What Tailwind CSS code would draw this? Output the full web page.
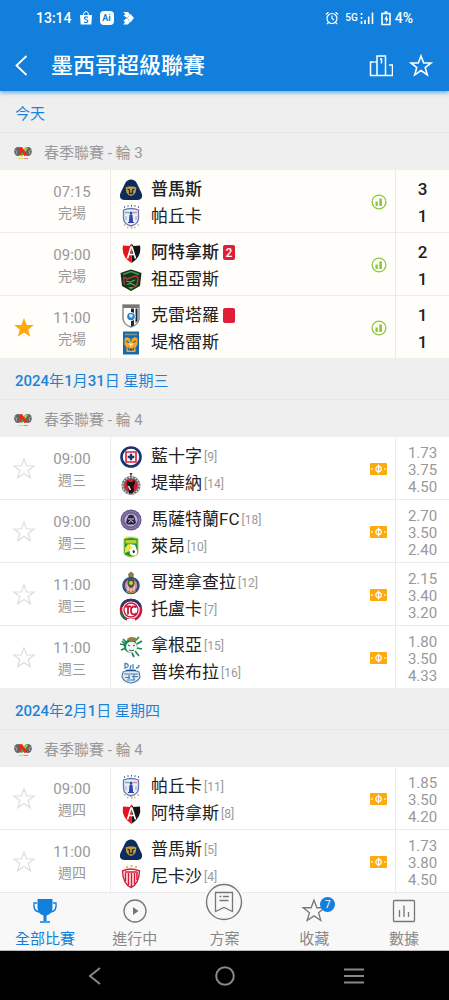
<!DOCTYPE html>
<html lang="zh-Hant">
<head>
    <meta charset="UTF-8">
    <meta name="viewport" content="width=device-width, initial-scale=1.0">
    <title>墨西哥超級聯賽</title>
    <script src="https://cdn.jsdelivr.net/npm/@tailwindcss/browser@4"></script>
</head>
<body class="flex min-h-screen flex-col bg-white font-[Roboto,'Noto_Sans_CJK_TC',sans-serif] text-[#212121]">

    <!-- Shared icons and team crests -->
    <svg class="hidden">
        <symbol id="star" viewBox="0 0 24 24"><path d="M12 2l2.700 7h7.300l-5.800 4.500 2.100 7.300L12 16.500l-6.300 4.300 2.100-7.300L2 9h7.300z" stroke-linejoin="miter"/></symbol>
        <symbol id="liga" viewBox="0 0 18 14">
            <ellipse cx="4" cy="5.500" rx="3.800" ry="4.600" fill="#666"/><ellipse cx="14" cy="5.500" rx="3.800" ry="4.600" fill="#666"/>
            <path d="M1 4l2 1.500L2 8M17 4l-2 1.500L16 8" stroke="#aaa" fill="none"/>
            <path d="M5 1.500L8 1l5.500 8-3 1L5 4z" fill="#f0261c"/>
            <path d="M10 3l1.500-2L14 2l-2.500 4z" fill="#9bd02c"/><path d="M5.500 9L8 6l1.500 2L8 10z" fill="#3fae35"/><path d="M4.500 7L7 5.500 8 7l-2 2z" fill="#f0261c"/>
            <path d="M4 12.500h6" stroke="#e3dc5a"/><path d="M10 12.500h4" stroke="#f08080"/>
        </symbol>
        <symbol id="pumas" viewBox="0 0 24 24">
            <path d="M12 1.500c2.500 0 4.500 1.200 5.700 3.500l4.800 10c1.500 4 0 7-4 7h-13c-4 0-5.500-3-4-7l4.800-10C7.500 2.700 9.500 1.500 12 1.500z" fill="#0b2c5c"/>
            <path d="M6.500 9.500l3-1h5l3 1-1 5-2 2.500-2.500 1-2.500-1-2-2.500z" fill="#c79b3b"/>
            <path d="M8.500 11l2 1v3.500h3V12l2-1" stroke="#0b2c5c" stroke-width="1.300" fill="none"/>
        </symbol>
        <symbol id="pachuca" viewBox="0 0 24 24">
            <path d="M4.500 5q7.500-3 15 0v8q0 6-7.500 8-7.500-2-7.500-8z" fill="#e9edf7" stroke="#6675b5" stroke-width="1.300"/>
            <path d="M6 7.500h4" stroke="#74b696" stroke-width="1.500"/><path d="M14 7.500h4" stroke="#e08a8a" stroke-width="1.500"/>
            <path d="M10.500 17l.5-7h2l.5 7zM9 17.500h6" fill="#3346a0" stroke="#3346a0"/><circle cx="12" cy="8" r="1.500" fill="#3346a0"/>
            <path d="M7 11v4M17 11v4" stroke="#9ba5d0"/>
            <path d="M5 2h1M8.500 1h1M12 .8h1M15.500 1h1M19 2h1" stroke="#3346a0" stroke-width="1.500"/>
            <path d="M5 20h1.500M8 22.500h1.500M12 23h1.500M15 22.500h1.500M18.500 20H20" stroke="#c9b25c" stroke-width="1.500"/>
        </symbol>
        <symbol id="atlas" viewBox="0 0 24 24">
            <path d="M12.500 2.500l2 2.500 6.500-.5q2 11-8.500 17.500z" fill="#141414"/><path d="M12.500 2.500l-2 2.500L4 4.500Q2 15.500 12.500 22z" fill="#e4161d"/>
            <path d="M8.500 17.500L12 6h1l3.500 11.500M10 13.500h5" stroke="#fff" stroke-width="1.600" fill="none"/>
        </symbol>
        <symbol id="juarez" viewBox="0 0 24 24">
            <path d="M1.500 5l5.500-2 5-1.500L17 3l5.500 2-1.500 13-9 5-9-5z" fill="#16321c"/>
            <path d="M4 6.500l8-3 8 3" stroke="#3e9e42" stroke-width="1.500" fill="none"/>
            <path d="M5 9l3 2 4-1.500L17 8l2 2-1 7-3 2" stroke="#b0353b" stroke-width="1.600" fill="none"/>
            <path d="M4.500 9l1 8" stroke="#b0353b" stroke-width="1.400"/>
            <path d="M7 13l4 1 5-2M8 16.500l4-1 4 2" stroke="#43b649" stroke-width="1.200" fill="none"/><path d="M9 19h6l-3 2.500z" fill="#43b649"/>
        </symbol>
        <symbol id="queretaro" viewBox="0 0 24 24">
            <path d="M4 1h16v14q-1 6-8 8-7-2-8-8z" fill="#fff" stroke="#8a8a8a" stroke-width="1.500"/>
            <path d="M4 1h16v3H4z" fill="#777"/><path d="M12 4.500h3v17l-3 1z" fill="#17263f"/><path d="M16.500 4.500h2V17l-2 2z" fill="#17263f"/>
            <circle cx="12" cy="12.500" r="4.500" fill="#fff"/><circle cx="12" cy="12.500" r="3.800" fill="#2a7fc5"/>
            <path d="M10 11l2-1.500 2 1.500-.7 2.500h-2.600z" fill="#cfe3f5"/>
        </symbol>
        <symbol id="tigres" viewBox="0 0 24 24">
            <path d="M4 .5h16v23H4z" fill="#1969ad"/><path d="M6 3.500h12" stroke="#7f9a8a" stroke-width="1.500"/>
            <path d="M5.500 7.500l2-1.500 4.500 2L16.500 6l2 1.500v6l-2 3v4.500h-9v-4.500l-2-3z" fill="#f2a928"/>
            <path d="M7 10l3 1.500M17 10l-3 1.500M12 7.500v3M9 16.500l1 3M15 16.500l-1 3" stroke="#1969ad" stroke-width="1.200"/>
            <path d="M9.500 12.500h5l-2.500 3z" fill="#f8e6b8"/><path d="M10.500 17.500h3v2h-3z" fill="#174d7c"/>
        </symbol>
        <symbol id="cruzazul" viewBox="0 0 24 24">
            <circle cx="12" cy="12" r="9.500" fill="#fff" stroke="#17346f" stroke-width="2.600"/>
            <path d="M7 7h10v10H7z" fill="#fff" stroke="#e0203a" stroke-width="1.600"/><path d="M12 8.700v6.600M8.700 12h6.600" stroke="#17346f" stroke-width="2.400"/>
        </symbol>
        <symbol id="tijuana" viewBox="0 0 24 24">
            <circle cx="12" cy="13.500" r="8" fill="#e0182f" stroke="#6f6f6f" stroke-width="3"/>
            <circle cx="12" cy="13.500" r="8.200" fill="none" stroke="#d5d5d5" stroke-width="1.500" stroke-dasharray="1.500 1.500"/>
            <path d="M8.500 8l2 2h3l2-2.500.5 4-1.500 2.500.5 5-2 2.500h-3l-.5-6-1.500-3z" fill="#141414"/><path d="M9.500 14l2 4" stroke="#fff" stroke-width="1.300"/>
            <path d="M10.500 1h3l-1.500 4z" fill="#b01a2c"/>
        </symbol>
        <symbol id="mazatlan" viewBox="0 0 24 24">
            <circle cx="12" cy="12" r="10.500" fill="#6d5a93"/><circle cx="12" cy="12" r="8.500" fill="none" stroke="#a598c0" stroke-width="1.200" stroke-dasharray="1 1"/>
            <circle cx="12" cy="12" r="6.500" fill="#b9b3cf"/><path d="M7 15l1-4 1.500-3.500L12 6.500l2.500 1L16 11l1 4-2 1.500H9z" fill="#25233f"/>
            <path d="M9 11h6M9.500 14.500l2.500-2 2.500 2" stroke="#dcd8e8" fill="none"/>
        </symbol>
        <symbol id="leon" viewBox="0 0 24 24">
            <path d="M5 3.500q7-2 14 0V18q0 2.500-7 4-7-1.500-7-4z" fill="#17964a" stroke="#b6d334"/><path d="M6.500 5h11v3.500h-11z" fill="#b6d334"/>
            <path d="M6 13l3-4 4 1 1 4-3 2-5 2z" fill="#f0e33c"/><path d="M11 9l5 1 1.500 4-3.500 1z" fill="#fff"/>
            <circle cx="14.500" cy="17" r="3.800" fill="#fff"/><path d="M13.500 16l1-1 1.500 1-.5 2h-1.500z" fill="#333"/>
            <path d="M7 1.500h10" stroke="#ead85a" stroke-dasharray="1 1.500"/>
        </symbol>
        <symbol id="chivas" viewBox="0 0 24 24">
            <path d="M9.500 6l-.5-3 3-2.500L15 3l-.5 3z" fill="#8a7d55"/><circle cx="12" cy="14.500" r="7.500" fill="#e08c86" stroke="#2c4f86" stroke-width="2.600"/>
            <path d="M9 8.500v12M12 17v4M15 8.500v12" stroke="#f5d3cc" stroke-width="1.200"/><path d="M8.500 8h7v5q-1 3.500-3.500 4-2.500-.5-3.500-4z" fill="#3a5d3a"/>
            <circle cx="12" cy="12" r="2" fill="#e5bf4d"/><path d="M7 20.500q5 3 10 0" stroke="#c79b3b" fill="none"/>
        </symbol>
        <symbol id="toluca" viewBox="0 0 24 24">
            <circle cx="12" cy="12" r="10" fill="#fff" stroke="#c81737" stroke-width="2.500"/>
            <path d="M2.500 8.500Q5 2 12 2t9.500 6.500" stroke="#28386f" stroke-width="2.600" fill="none"/><path d="M2 14q1 5 5 7" stroke="#23744a" stroke-width="2.600" fill="none"/>
            <circle cx="12" cy="12" r="7" fill="#fff" stroke="#c81737" stroke-width="1.300"/>
            <path d="M6 8.500h6M9 8.500v8" stroke="#c81737" stroke-width="1.800"/><path d="M17.500 9.500q-1-1-2.500-1-3 0-3 4t3 4q1.500 0 2.500-1" stroke="#c81737" stroke-width="1.800" fill="none"/>
            <path d="M8 22.500h8" stroke="#fff" stroke-width="3"/>
        </symbol>
        <symbol id="santos" viewBox="0 0 24 24">
            <path d="M1 10l5 1M2 16l5-2M4 5l4 4M16 7l4-4M18 10l5-3M18 14l5 1M16 17l4 5M13 19l2 4M3 7l4 4" stroke="#178a55" stroke-width="1.700"/>
            <circle cx="11.500" cy="12" r="6.800" fill="#178a55"/><circle cx="12.500" cy="13" r="5.500" fill="#f1f7f3"/>
            <path d="M7.500 5l4-2 5 .5 1 3-5 1.500z" fill="#a07a3a"/><path d="M9 11l2 1M14 12l2-1M10 16q2.500 1.500 5 0" stroke="#3b5145" fill="none"/>
        </symbol>
        <symbol id="puebla" viewBox="0 0 24 24">
            <path d="M4 11q8-4 16 0l1 5q-2 5-9 6-7-1-9-6z" fill="#dfe9f3" stroke="#4b7fae" stroke-width="1.200"/>
            <path d="M5 13h14M6 16.500h5M13 15.500h6M8 19h8M10 14v4M15 13v6" stroke="#4b7fae" stroke-width="1.200"/>
            <path d="M6 8V2.500q4 0 3 3-1 1.500-3 1M11 8l1-4M14 8V3M17 7q3 0 3-3" stroke="#4b86b8" stroke-width="1.300" fill="none"/><path d="M7 9.500h10" stroke="#1f5282" stroke-width="1.500"/>
        </symbol>
        <symbol id="necaxa" viewBox="0 0 24 24">
            <path d="M3.500 6q8-4 17 0-.5 13-8.500 16.500Q4 19 3.500 6z" fill="#fff" stroke="#d51c3a" stroke-width="1.400"/>
            <path d="M6.500 7v9M9.500 6v14M12.500 6v16M15.500 6v13.500M18 7v8" stroke="#d51c3a" stroke-width="1.600"/>
            <path d="M6 7h12" stroke="#e0526a" stroke-width="2"/><path d="M7 2h2M11.500 1h2M16 2h2" stroke="#e2c24c" stroke-width="2"/>
        </symbol>
        <symbol id="chart" viewBox="0 0 16 16">
            <circle cx="8" cy="8" r="6.900" fill="none" stroke="#8cc63f" stroke-width="1.300"/>
            <path d="M4.500 7.500h2.300V12H4.500zM8.300 4.500h2.600V12H8.300z" fill="#8cc63f"/>
        </symbol>
        <symbol id="pitch" viewBox="0 0 17 12">
            <rect width="17" height="12" rx="1" fill="#fdaa0d"/>
            <path d="M8.500 1.500v9M2 5v2M15 5v2" stroke="#fff" stroke-width="1.200"/><circle cx="8.500" cy="6" r="2.700" fill="none" stroke="#fff" stroke-width="1.200"/>
        </symbol>
    </svg>

    <!-- Header -->
    <header class="relative z-10 bg-[#117fdb] pb-1 text-white shadow-[0_2px_4px_#117fdb90]">
        <div class="flex h-9 items-center justify-between pr-9 pl-9 text-sm font-medium">
            <div class="flex items-center gap-[7px]">
                <span>13:14</span>
                <svg class="h-[14px] w-[14px]" viewBox="1 1 14 14"><path d="M2 5h12l-.7 9.500H2.700z" fill="#fff"/><path d="M5.500 5q0-3.500 2.500-3.500T10.500 5" stroke="#fff" fill="none"/><path d="M10 7.500Q8 6.300 6.500 7.500q-.8 1.500 1.500 2 2.500.8 1.500 2.500-1.500 1-3.500 0" stroke="#117fdb" stroke-width="1.200" fill="none"/></svg>
                <span class="flex h-[14px] w-[14px] items-center justify-center rounded-sm bg-white text-[9px] font-bold text-[#117fdb]">Ai</span>
                <svg class="h-[14px] w-[14px]" viewBox="0 0 14 14" fill="#fff"><path d="M2 1h5l2 2.500-3 3.500L2.500 4.500 4.500 3zM9.500 3L13 7l-3.500 4.500L6.500 7zM2.500 9.500L6 7l3 4-2 2.500H2l2-2z"/></svg>
            </div>
            <div class="flex items-center gap-[6px]">
                <svg class="h-[14px] w-[14px]" viewBox="0 0 14 14" fill="none" stroke="#fff" stroke-width="1.200"><circle cx="7" cy="7.500" r="5"/><path d="M7 4.500v3l2 1.500M1 3.500L3.500 1.200M13 3.500l-2.500-2.300M3.500 11.500L2 13M10.500 11.500L12 13"/></svg>
                <span class="text-[10px]">5G</span>
                <svg class="-ml-1 h-[14px] w-[14px]" viewBox="0 0 14 14" stroke="#fff" stroke-width="1.600"><path d="M1.500 2v2M1.500 6v2M1.500 10v3M5 9v4M8.700 5.500V13M12.500 1.500V13"/></svg>
                <span class="flex items-center gap-[3px]">
                    <svg class="h-4 w-3" viewBox="0 0 12 16" fill="none" stroke="#fff" stroke-width="1.600"><path d="M2 3.500h8v11H2zM4.500 2h3"/><path d="M7 5L4.200 9.500H6V13l2.500-4.500H7z" fill="#fff" stroke="none"/></svg>
                    4%
                </span>
            </div>
        </div>
        <div class="flex h-[51px] items-center pt-2 pr-4 pl-[11px]">
            <button class="flex w-10 items-center" aria-label="返回">
                <svg class="h-6 w-6" viewBox="0 0 24 24" fill="none" stroke="#fff" stroke-width="1.800"><path d="M15.500 2L5.500 11.500l10 9.500"/></svg>
            </button>
            <h1 class="grow text-[22px] leading-8 font-medium">墨西哥超級聯賽</h1>
            <button class="mr-4" aria-label="積分榜">
                <svg class="h-6 w-6" viewBox="0 0 24 24" fill="none" stroke="#fff" stroke-width="1.500"><path d="M8 21.500V2h8.500v19.500M8 8H5.500M5 8H1.500v13.500h22V11H20M11 5h1.500v4.500"/></svg>
            </button>
            <button aria-label="收藏聯賽">
                <svg class="h-6 w-6" fill="none" stroke="#fff" stroke-width="1.600"><use href="#star"/></svg>
            </button>
        </div>
    </header>

    <!-- Match list -->
    <main class="grow">
        <section>
            <h2 class="h-[42px] border-b border-[#e6e6e6] bg-[#efefef] pt-1 pl-[15px] text-[15px] leading-[38px] font-normal text-[#1c84d8]">今天</h2>
            <h3 class="flex h-[37px] items-center bg-[#efefef] pt-[3px] pl-[14px] text-[15px] text-[#999]">
                <svg class="mr-3 h-[14px] w-[18px]"><use href="#liga"/></svg>春季聯賽 - 輪 3
            </h3>
            <ul class="divide-y divide-[#ebebe8] bg-[#fffefa]">
                <li class="grid h-[63px] grid-cols-[48px_62px_1fr_34px_54px] last:h-[62px]">
                    <span></span>
                    <div class="flex flex-col justify-center pt-1 pr-[14px] text-center leading-[21px] text-[#999]"><time class="text-[15px]">07:15</time><span class="text-sm leading-[21px]">完場</span></div>
                    <div class="flex flex-col justify-center border-l border-[#ebebe8] pt-1 pl-2 text-[17px] leading-[27px]">
                        <p class="flex items-center font-medium"><svg class="mr-2 h-6 w-6"><use href="#pumas"/></svg>普馬斯</p>
                        <p class="flex items-center"><svg class="mr-2 h-6 w-6"><use href="#pachuca"/></svg>帕丘卡</p>
                    </div>
                    <svg class="mt-[2px] ml-[2px] h-4 w-4 self-center justify-self-center"><use href="#chart"/></svg>
                    <div class="flex flex-col justify-center border-l border-[#ebebe8] pt-1 text-center text-[17px] leading-[27px] font-medium"><span>3</span><span>1</span></div>
                </li>
                <li class="grid h-[63px] grid-cols-[48px_62px_1fr_34px_54px] last:h-[62px]">
                    <span></span>
                    <div class="flex flex-col justify-center pt-1 pr-[14px] text-center leading-[21px] text-[#999]"><time class="text-[15px]">09:00</time><span class="text-sm leading-[21px]">完場</span></div>
                    <div class="flex flex-col justify-center border-l border-[#ebebe8] pt-1 pl-2 text-[17px] leading-[27px]">
                        <p class="flex items-center font-medium"><svg class="mr-2 h-6 w-6"><use href="#atlas"/></svg>阿特拿斯<span class="ml-1 flex h-[15px] w-3 items-center justify-center rounded-xs bg-[#e01e37] text-xs font-medium text-white">2</span></p>
                        <p class="flex items-center"><svg class="mr-2 h-6 w-6"><use href="#juarez"/></svg>祖亞雷斯</p>
                    </div>
                    <svg class="mt-[2px] ml-[2px] h-4 w-4 self-center justify-self-center"><use href="#chart"/></svg>
                    <div class="flex flex-col justify-center border-l border-[#ebebe8] pt-1 text-center text-[17px] leading-[27px] font-medium"><span>2</span><span>1</span></div>
                </li>
                <li class="grid h-[63px] grid-cols-[48px_62px_1fr_34px_54px] last:h-[62px]">
                    <button class="flex items-center justify-center pt-[2px]" aria-label="取消收藏"><svg class="h-6 w-6" fill="#fdaa0d"><use href="#star"/></svg></button>
                    <div class="flex flex-col justify-center pt-1 pr-[14px] text-center leading-[21px] text-[#999]"><time class="text-[15px]">11:00</time><span class="text-sm leading-[21px]">完場</span></div>
                    <div class="flex flex-col justify-center border-l border-[#ebebe8] pt-1 pl-2 text-[17px] leading-[27px]">
                        <p class="flex items-center"><svg class="mr-2 h-6 w-6"><use href="#queretaro"/></svg>克雷塔羅<span class="ml-1 h-[15px] w-3 rounded-xs bg-[#e01e37]"></span></p>
                        <p class="flex items-center"><svg class="mr-2 h-6 w-6"><use href="#tigres"/></svg>堤格雷斯</p>
                    </div>
                    <svg class="mt-[2px] ml-[2px] h-4 w-4 self-center justify-self-center"><use href="#chart"/></svg>
                    <div class="flex flex-col justify-center border-l border-[#ebebe8] pt-1 text-center text-[17px] leading-[27px] font-medium"><span>1</span><span>1</span></div>
                </li>
            </ul>
        </section>

        <section>
            <h2 class="h-[42px] border-b border-[#e6e6e6] bg-[#efefef] pt-1 pl-[15px] text-[15px] leading-[38px] font-normal text-[#1c84d8]"><b class="font-medium">2024</b>年<b class="font-medium">1</b>月<b class="font-medium">31</b>日 星期三</h2>
            <h3 class="flex h-[37px] items-center bg-[#efefef] pt-[3px] pl-[14px] text-[15px] text-[#999]">
                <svg class="mr-3 h-[14px] w-[18px]"><use href="#liga"/></svg>春季聯賽 - 輪 4
            </h3>
            <ul class="divide-y divide-[#ebebeb] bg-white">
                <li class="grid h-[63px] grid-cols-[48px_62px_1fr_34px_54px] last:h-[62px]">
                    <button class="flex items-center justify-center pt-[2px]" aria-label="收藏"><svg class="h-6 w-6" fill="none" stroke="#ddd" stroke-width="1.200"><use href="#star"/></svg></button>
                    <div class="flex flex-col justify-center pt-1 pr-[14px] text-center leading-[21px] text-[#999]"><time class="text-[15px]">09:00</time><span class="text-sm leading-[21px]">週三</span></div>
                    <div class="flex flex-col justify-center border-l border-[#ebebeb] pt-1 pl-2 text-[17px] leading-[27px]">
                        <p class="flex items-center"><svg class="mr-2 h-6 w-6"><use href="#cruzazul"/></svg>藍十字<span class="ml-[2px] text-xs text-[#999]">[9]</span></p>
                        <p class="flex items-center"><svg class="mr-2 h-6 w-6"><use href="#tijuana"/></svg>堤華納<span class="ml-[2px] text-xs text-[#999]">[14]</span></p>
                    </div>
                    <svg class="mt-[2px] h-3 w-[17px] self-center justify-self-center"><use href="#pitch"/></svg>
                    <div class="flex flex-col justify-center border-l border-[#ebebeb] pt-1 text-center text-[15px] leading-[17px] text-[#999]"><span>1.73</span><span>3.75</span><span>4.50</span></div>
                </li>
                <li class="grid h-[63px] grid-cols-[48px_62px_1fr_34px_54px] last:h-[62px]">
                    <button class="flex items-center justify-center pt-[2px]" aria-label="收藏"><svg class="h-6 w-6" fill="none" stroke="#ddd" stroke-width="1.200"><use href="#star"/></svg></button>
                    <div class="flex flex-col justify-center pt-1 pr-[14px] text-center leading-[21px] text-[#999]"><time class="text-[15px]">09:00</time><span class="text-sm leading-[21px]">週三</span></div>
                    <div class="flex flex-col justify-center border-l border-[#ebebeb] pt-1 pl-2 text-[17px] leading-[27px]">
                        <p class="flex items-center"><svg class="mr-2 h-6 w-6"><use href="#mazatlan"/></svg>馬薩特蘭FC<span class="ml-[2px] text-xs text-[#999]">[18]</span></p>
                        <p class="flex items-center"><svg class="mr-2 h-6 w-6"><use href="#leon"/></svg>萊昂<span class="ml-[2px] text-xs text-[#999]">[10]</span></p>
                    </div>
                    <svg class="mt-[2px] h-3 w-[17px] self-center justify-self-center"><use href="#pitch"/></svg>
                    <div class="flex flex-col justify-center border-l border-[#ebebeb] pt-1 text-center text-[15px] leading-[17px] text-[#999]"><span>2.70</span><span>3.50</span><span>2.40</span></div>
                </li>
                <li class="grid h-[63px] grid-cols-[48px_62px_1fr_34px_54px] last:h-[62px]">
                    <button class="flex items-center justify-center pt-[2px]" aria-label="收藏"><svg class="h-6 w-6" fill="none" stroke="#ddd" stroke-width="1.200"><use href="#star"/></svg></button>
                    <div class="flex flex-col justify-center pt-1 pr-[14px] text-center leading-[21px] text-[#999]"><time class="text-[15px]">11:00</time><span class="text-sm leading-[21px]">週三</span></div>
                    <div class="flex flex-col justify-center border-l border-[#ebebeb] pt-1 pl-2 text-[17px] leading-[27px]">
                        <p class="flex items-center"><svg class="mr-2 h-6 w-6"><use href="#chivas"/></svg>哥達拿查拉<span class="ml-[2px] text-xs text-[#999]">[12]</span></p>
                        <p class="flex items-center"><svg class="mr-2 h-6 w-6"><use href="#toluca"/></svg>托盧卡<span class="ml-[2px] text-xs text-[#999]">[7]</span></p>
                    </div>
                    <svg class="mt-[2px] h-3 w-[17px] self-center justify-self-center"><use href="#pitch"/></svg>
                    <div class="flex flex-col justify-center border-l border-[#ebebeb] pt-1 text-center text-[15px] leading-[17px] text-[#999]"><span>2.15</span><span>3.40</span><span>3.20</span></div>
                </li>
                <li class="grid h-[63px] grid-cols-[48px_62px_1fr_34px_54px] last:h-[62px]">
                    <button class="flex items-center justify-center pt-[2px]" aria-label="收藏"><svg class="h-6 w-6" fill="none" stroke="#ddd" stroke-width="1.200"><use href="#star"/></svg></button>
                    <div class="flex flex-col justify-center pt-1 pr-[14px] text-center leading-[21px] text-[#999]"><time class="text-[15px]">11:00</time><span class="text-sm leading-[21px]">週三</span></div>
                    <div class="flex flex-col justify-center border-l border-[#ebebeb] pt-1 pl-2 text-[17px] leading-[27px]">
                        <p class="flex items-center"><svg class="mr-2 h-6 w-6"><use href="#santos"/></svg>拿根亞<span class="ml-[2px] text-xs text-[#999]">[15]</span></p>
                        <p class="flex items-center"><svg class="mr-2 h-6 w-6"><use href="#puebla"/></svg>普埃布拉<span class="ml-[2px] text-xs text-[#999]">[16]</span></p>
                    </div>
                    <svg class="mt-[2px] h-3 w-[17px] self-center justify-self-center"><use href="#pitch"/></svg>
                    <div class="flex flex-col justify-center border-l border-[#ebebeb] pt-1 text-center text-[15px] leading-[17px] text-[#999]"><span>1.80</span><span>3.50</span><span>4.33</span></div>
                </li>
            </ul>
        </section>

        <section>
            <h2 class="h-[42px] border-b border-[#e6e6e6] bg-[#efefef] pt-1 pl-[15px] text-[15px] leading-[38px] font-normal text-[#1c84d8]"><b class="font-medium">2024</b>年<b class="font-medium">2</b>月<b class="font-medium">1</b>日 星期四</h2>
            <h3 class="flex h-[37px] items-center bg-[#efefef] pt-[3px] pl-[14px] text-[15px] text-[#999]">
                <svg class="mr-3 h-[14px] w-[18px]"><use href="#liga"/></svg>春季聯賽 - 輪 4
            </h3>
            <ul class="divide-y divide-[#ebebeb] bg-white">
                <li class="grid h-[63px] grid-cols-[48px_62px_1fr_34px_54px] last:h-[62px]">
                    <button class="flex items-center justify-center pt-[2px]" aria-label="收藏"><svg class="h-6 w-6" fill="none" stroke="#ddd" stroke-width="1.200"><use href="#star"/></svg></button>
                    <div class="flex flex-col justify-center pt-1 pr-[14px] text-center leading-[21px] text-[#999]"><time class="text-[15px]">09:00</time><span class="text-sm leading-[21px]">週四</span></div>
                    <div class="flex flex-col justify-center border-l border-[#ebebeb] pt-1 pl-2 text-[17px] leading-[27px]">
                        <p class="flex items-center"><svg class="mr-2 h-6 w-6"><use href="#pachuca"/></svg>帕丘卡<span class="ml-[2px] text-xs text-[#999]">[11]</span></p>
                        <p class="flex items-center"><svg class="mr-2 h-6 w-6"><use href="#atlas"/></svg>阿特拿斯<span class="ml-[2px] text-xs text-[#999]">[8]</span></p>
                    </div>
                    <svg class="mt-[2px] h-3 w-[17px] self-center justify-self-center"><use href="#pitch"/></svg>
                    <div class="flex flex-col justify-center border-l border-[#ebebeb] pt-1 text-center text-[15px] leading-[17px] text-[#999]"><span>1.85</span><span>3.50</span><span>4.20</span></div>
                </li>
                <li class="grid h-[63px] grid-cols-[48px_62px_1fr_34px_54px] last:h-[62px]">
                    <button class="flex items-center justify-center pt-[2px]" aria-label="收藏"><svg class="h-6 w-6" fill="none" stroke="#ddd" stroke-width="1.200"><use href="#star"/></svg></button>
                    <div class="flex flex-col justify-center pt-1 pr-[14px] text-center leading-[21px] text-[#999]"><time class="text-[15px]">11:00</time><span class="text-sm leading-[21px]">週四</span></div>
                    <div class="flex flex-col justify-center border-l border-[#ebebeb] pt-1 pl-2 text-[17px] leading-[27px]">
                        <p class="flex items-center"><svg class="mr-2 h-6 w-6"><use href="#pumas"/></svg>普馬斯<span class="ml-[2px] text-xs text-[#999]">[5]</span></p>
                        <p class="flex items-center"><svg class="mr-2 h-6 w-6"><use href="#necaxa"/></svg>尼卡沙<span class="ml-[2px] text-xs text-[#999]">[4]</span></p>
                    </div>
                    <svg class="mt-[2px] h-3 w-[17px] self-center justify-self-center"><use href="#pitch"/></svg>
                    <div class="flex flex-col justify-center border-l border-[#ebebeb] pt-1 text-center text-[15px] leading-[17px] text-[#999]"><span>1.73</span><span>3.80</span><span>4.50</span></div>
                </li>
            </ul>
        </section>
    </main>

    <!-- Tab bar -->
    <nav class="relative grid h-[59px] grid-cols-5 border-t border-b border-t-[#e8e8e8] border-b-[#bbb] bg-[#f8f8f8] text-[15px] leading-[22px] text-[#888]">
        <a href="#" class="flex flex-col items-center justify-end gap-1 text-[#117fdb]">
            <svg class="h-[26px] w-[26px]" viewBox="0 0 26 26"><path d="M5.500 1h15v9q-.5 6-6 7.500v5.500h-3v-5.500Q6 16 5.500 10z" fill="#117fdb"/><path d="M5 5H2q-1 8 5 9M21 5h3q1 8-5 9M8 24h10" fill="none" stroke="#117fdb" stroke-width="1.400"/></svg>
            全部比賽
        </a>
        <a href="#" class="flex flex-col items-center justify-end gap-1">
            <svg class="h-[26px] w-[26px]" viewBox="0 0 26 26"><circle cx="13" cy="13" r="11" fill="none" stroke="#777" stroke-width="1.300"/><path d="M11 9l5.500 4-5.500 4z" fill="#777"/></svg>
            進行中
        </a>
        <a href="#" class="-mt-4 flex flex-col items-center justify-end gap-1">
            <svg class="h-11 w-11" viewBox="0 0 44 44"><circle cx="22" cy="22" r="21" fill="#f8f8f8"/><circle cx="22" cy="22" r="17.500" fill="none" stroke="#777" stroke-width="1.400"/><path d="M13.500 12.500h17v19L22 27.500l-8.500 4zM17.500 16.500h2M21 16.500h6M17.500 20.500h9" fill="none" stroke="#777" stroke-width="1.300"/></svg>
            方案
        </a>
        <a href="#" class="relative flex flex-col items-center justify-end gap-1">
            <svg class="h-[26px] w-[26px]" fill="none" stroke="#777" stroke-width="1.200"><use href="#star"/></svg>
            <span class="absolute top-1 left-1/2 ml-[6px] flex h-[15px] w-[15px] items-center justify-center rounded-full bg-[#117fdb] text-[10px] text-white">7</span>
            收藏
        </a>
        <a href="#" class="flex flex-col items-center justify-end gap-1">
            <svg class="h-[26px] w-[26px]" viewBox="0 0 26 26" fill="none" stroke="#777" stroke-width="1.300"><rect x="2.500" y="2.500" width="21" height="21" rx="1"/><path d="M8.500 12v7M13 7.500V19M17.500 14v5"/></svg>
            數據
        </a>
    </nav>

    <!-- System navigation -->
    <footer class="flex h-[49px] items-center justify-center gap-[105px] bg-black">
        <button aria-label="返回"><svg class="h-6 w-6" viewBox="0 0 24 24" fill="none" stroke="#888" stroke-width="2"><path d="M16 4L6 12l10 8"/></svg></button>
        <button aria-label="主畫面"><svg class="h-6 w-6" viewBox="0 0 24 24" fill="none" stroke="#888" stroke-width="2"><circle cx="12" cy="12" r="8.800"/></svg></button>
        <button aria-label="最近使用"><svg class="h-6 w-6" viewBox="0 0 24 24" stroke="#888" stroke-width="2"><path d="M2 5.500h20M2 12h20M2 18.500h20"/></svg></button>
    </footer>
</body>
</html>
